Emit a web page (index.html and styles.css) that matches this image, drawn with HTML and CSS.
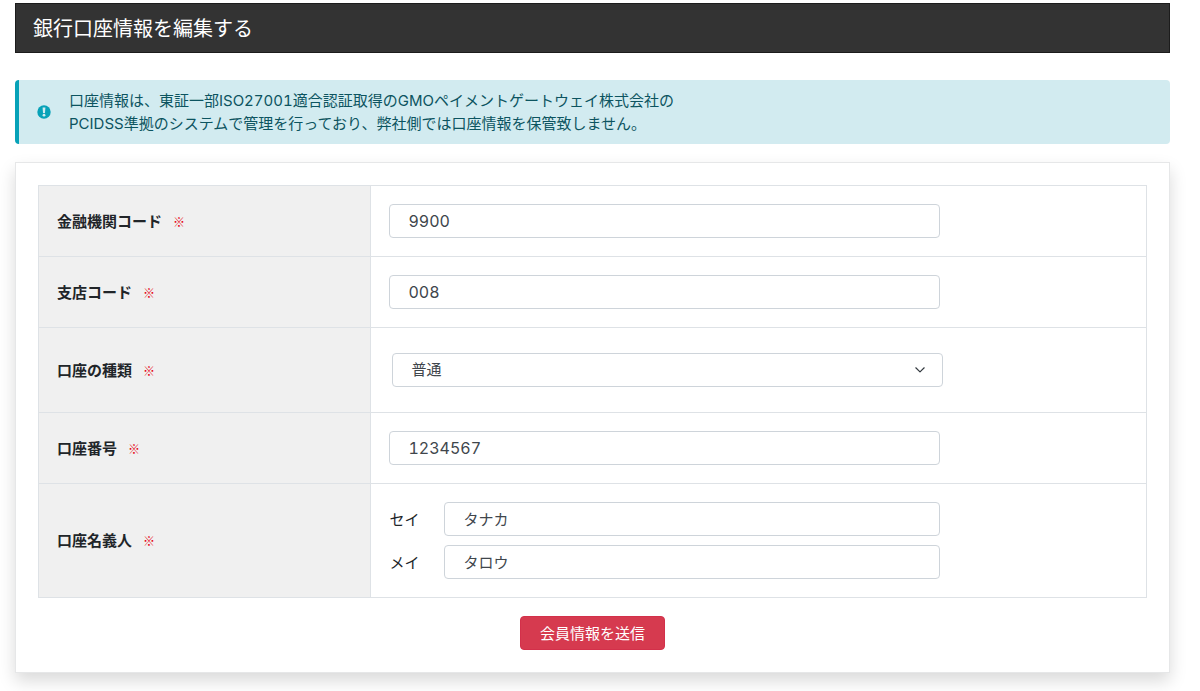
FILE: index.html
```html
<!DOCTYPE html>
<html lang="ja">
<head>
<meta charset="utf-8">
<meta name="viewport" content="width=device-width, initial-scale=1">
<title>銀行口座情報を編集する</title>
<link rel="stylesheet" href="styles.css">
</head>
<body>
<main class="page">
  <h1 class="page-title">銀行口座情報を編集する</h1>

  <div class="notice">
    <svg class="notice-icon" viewBox="0 0 14 14" aria-hidden="true">
      <circle cx="7" cy="7" r="6.7" fill="#07a2b8"/>
      <path d="M5.6 2.6h2.8l-.4 5.3H6z" fill="#d2ebf0"/>
      <circle cx="7" cy="10.2" r="1.4" fill="#d2ebf0"/>
    </svg>
    <p class="notice-text">口座情報は、東証一部ISO27001適合認証取得のGMOペイメントゲートウェイ株式会社の<br>PCIDSS準拠のシステムで管理を行っており、弊社側では口座情報を保管致しません。</p>
  </div>

  <form class="card">
    <table class="form-table">
      <tr>
        <th scope="row"><label for="bank">金融機関コード<span class="required">※</span></label></th>
        <td><input class="control" id="bank" type="text" value="9900"></td>
      </tr>
      <tr>
        <th scope="row"><label for="branch">支店コード<span class="required">※</span></label></th>
        <td><input class="control" id="branch" type="text" value="008"></td>
      </tr>
      <tr>
        <th scope="row"><label for="kind">口座の種類<span class="required">※</span></label></th>
        <td>
          <div class="select-wrap">
            <select class="control select" id="kind">
              <option>普通</option>
            </select>
            <svg class="chevron" viewBox="0 0 10 6" aria-hidden="true"><path d="M.8.8 5 4.9 9.2.8" fill="none" stroke="#343a40" stroke-width="1.2" stroke-linecap="round" stroke-linejoin="round"/></svg>
          </div>
        </td>
      </tr>
      <tr>
        <th scope="row"><label for="number">口座番号<span class="required">※</span></label></th>
        <td><input class="control" id="number" type="text" value="1234567"></td>
      </tr>
      <tr>
        <th scope="row">口座名義人<span class="required">※</span></th>
        <td>
          <div class="names">
            <label for="sei">セイ</label>
            <input class="control" id="sei" type="text" value="タナカ">
            <label for="mei">メイ</label>
            <input class="control" id="mei" type="text" value="タロウ">
          </div>
        </td>
      </tr>
    </table>
    <button class="submit" type="submit">会員情報を送信</button>
  </form>
</main>
</body>
</html>
```

FILE: styles.css
```css
* {
  box-sizing: border-box;
}

body {
  margin: 0;
  background: #fff;
  color: #212529;
  font-family: Inter, "Noto Sans CJK JP", sans-serif;
  font-size: 15px;
  font-variant-numeric: tabular-nums;
  line-height: 23px;
}

.page {
  padding: 3px 30px 18px 15px;
}

.page-title {
  margin: 0 0 27px;
  padding: 12px 17px 10px;
  background: #333;
  border: 1px solid #1c1c1c;
  color: #fff;
  font-size: 20px;
  font-weight: 400;
  line-height: 26px;
}

.notice {
  display: flex;
  align-items: center;
  gap: 18px;
  margin-bottom: 18px;
  padding: 9px 18px;
  background: #d2ebf0;
  border-left: 4px solid #07a2b8;
  border-radius: 4px;
  color: #0c5460;
}

.notice-icon {
  flex: none;
  width: 14px;
  height: 14px;
}

.notice-text {
  margin: 0;
}

.card {
  padding: 22px;
  background: #fff;
  border: 1px solid #e6e7e8;
  box-shadow: 0 8px 16px rgba(0, 0, 0, 0.15);
}

.form-table {
  width: 100%;
  border-collapse: collapse;
  table-layout: fixed;
}

.form-table th,
.form-table td {
  padding: 18px;
  border: 1px solid #dee2e6;
  vertical-align: middle;
}

.form-table th {
  width: 30%;
  background: #f0f0f0;
  font-weight: 700;
  text-align: left;
}

.required {
  margin-left: 11px;
  color: #e60012;
  font-family: "Noto Sans CJK JP", sans-serif;
  font-size: 12px;
  font-weight: 400;
  line-height: 1;
}

.control {
  display: block;
  width: 74.5%;
  height: 34px;
  margin: 0;
  padding: 0 18px;
  background: #fff;
  border: 1px solid #ced4da;
  border-radius: 4px;
  color: #40464c;
  font-family: inherit;
  font-size: 16px;
  font-variant-numeric: inherit;
}

.select-wrap {
  display: grid;
  align-items: center;
  width: 74.5%;
  margin: 7px 3px;
}

.select {
  grid-area: 1 / 1;
  width: 100%;
  padding-bottom: 2px;
  appearance: none;
  font-size: 15px;
}

.chevron {
  grid-area: 1 / 1;
  justify-self: end;
  width: 10px;
  height: 6px;
  margin-right: 18px;
  pointer-events: none;
}

.names {
  display: grid;
  grid-template-columns: 46px 1fr;
  gap: 9px;
  align-items: center;
  width: 74.5%;
}

.names .control {
  width: 100%;
  padding-bottom: 2px;
  font-size: 15px;
}

.submit {
  display: block;
  height: 34px;
  margin: 18px auto 0;
  padding: 0 19px 2px;
  background: #d63a4f;
  border: 1px solid #d3304a;
  border-radius: 4px;
  color: #fff;
  font-family: inherit;
  font-size: 15px;
}
```
